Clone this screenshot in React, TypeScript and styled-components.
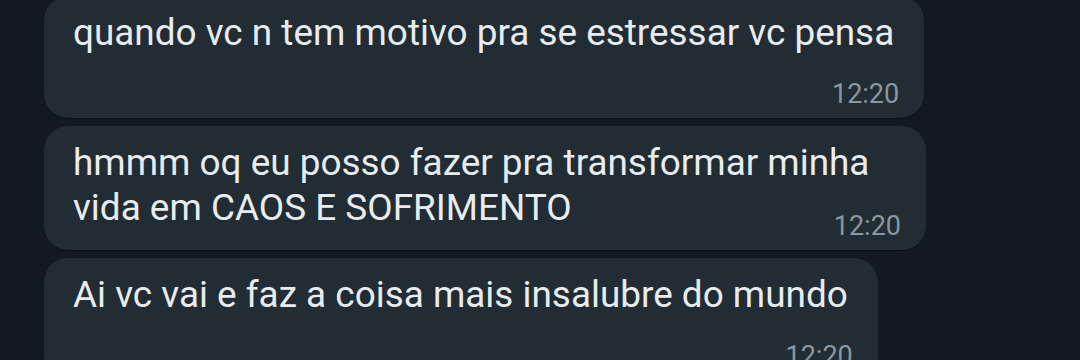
import React from 'react';
import styled, {createGlobalStyle} from 'styled-components';

const GlobalStyle = createGlobalStyle`
    html, body {
        margin: 0;
        padding: 0;
        background: #121a20;
        width: 1080px;
        height: 360px;
        overflow: hidden;
    }
`

const ChatList = styled.div`
    display: flex;
    flex-direction: column;
    align-items: flex-start;
    gap: 8px;
    padding-left: 44px;
    margin-top: -4px;
    font-family: Roboto, "Noto Sans", sans-serif;
`

// full = bubble stretched to the max width (text wrapped)
const Bubble = styled.div<{ $full?: boolean }>`
    box-sizing: border-box;
    width: ${p => p.$full ? '882px' : 'auto'};
    background: #212c34;
    border-radius: 24px;
    padding: 14px 30px 9px 29px;
    box-shadow: 0 1px 1px rgba(0, 0, 0, 0.35);
`

const Text = styled.div`
    color: #e8ecef;
    font-size: 36.9px;
    line-height: 45px;
    white-space: nowrap;
`

const Time = styled.div<{ $overlap?: boolean }>`
    color: #8b979f;
    font-size: 27px;
    line-height: 30px;
    text-align: right;
    margin-right: -5px;
    margin-top: ${p => p.$overlap ? '-19px' : '24px'};
`

const messages = [
    {lines: ['quando vc n tem motivo pra se estressar vc pensa'], time: '12:20'},
    {lines: ['hmmm oq eu posso fazer pra transformar minha', 'vida em CAOS E SOFRIMENTO'], time: '12:20', wrapped: true},
    {lines: ['Ai vc vai e faz a coisa mais insalubre do mundo'], time: '12:20'},
]

export default function App() {
    return (
        <>
            <GlobalStyle/>
            <ChatList>
                {messages.map((m, i) => (
                    <Bubble key={i} $full={m.wrapped}>
                        {m.lines.map((l, j) => <Text key={j}>{l}</Text>)}
                        <Time $overlap={m.wrapped}>{m.time}</Time>
                    </Bubble>
                ))}
            </ChatList>
        </>
    );
}
